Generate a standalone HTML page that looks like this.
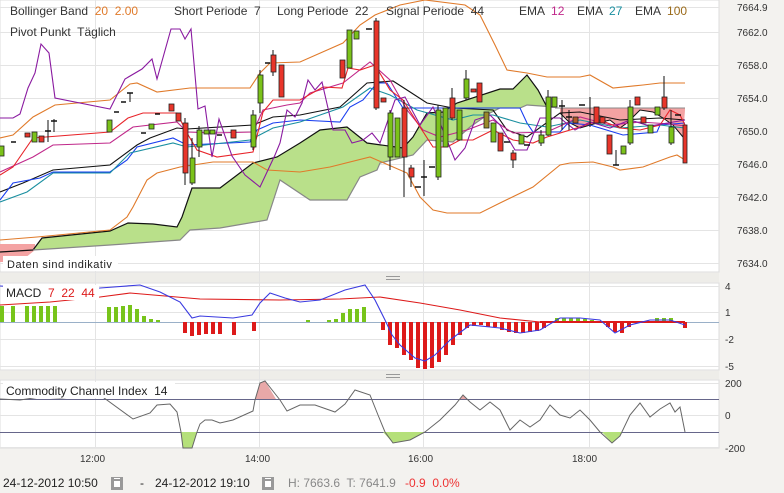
<!DOCTYPE html>
<html><head><meta charset="utf-8"><style>
html,body{margin:0;padding:0;background:#f3f2ef;width:784px;height:493px;overflow:hidden}
svg{display:block}
text{font-family:"Liberation Sans",sans-serif;white-space:pre}
</style></head><body>
<svg width="784" height="493" viewBox="0 0 784 493" xmlns="http://www.w3.org/2000/svg" xml:space="preserve">
<rect x="0" y="0" width="784" height="493" fill="#f3f2ef"/>
<rect x="0" y="0" width="719" height="272" fill="#fff" stroke="#dcdcdc"/>
<rect x="0" y="283" width="719" height="87" fill="#fff" stroke="#dcdcdc"/>
<rect x="0" y="380" width="719" height="68" fill="#fff" stroke="#dcdcdc"/>
<rect x="0" y="273" width="719" height="9" fill="#eeede9"/>
<rect x="0" y="371" width="719" height="8" fill="#eeede9"/>
<g stroke="#999" stroke-width="1">
<line x1="386" y1="276.5" x2="400" y2="276.5"/><line x1="386" y1="279.5" x2="400" y2="279.5"/>
<line x1="386" y1="374.5" x2="400" y2="374.5"/><line x1="386" y1="377.5" x2="400" y2="377.5"/>
</g>
<g stroke="#e4e4e4" stroke-width="1">
<line x1="0" y1="7.5" x2="719" y2="7.5"/><line x1="0" y1="32.5" x2="719" y2="32.5"/>
<line x1="0" y1="65.5" x2="719" y2="65.5"/><line x1="0" y1="98.5" x2="719" y2="98.5"/>
<line x1="0" y1="131.5" x2="719" y2="131.5"/><line x1="0" y1="164.5" x2="719" y2="164.5"/>
<line x1="0" y1="197.5" x2="719" y2="197.5"/><line x1="0" y1="230.5" x2="719" y2="230.5"/>
<line x1="0" y1="263.5" x2="719" y2="263.5"/>
<line x1="95.5" y1="0" x2="95.5" y2="448"/><line x1="259.5" y1="0" x2="259.5" y2="448"/>
<line x1="423.5" y1="0" x2="423.5" y2="448"/><line x1="589.5" y1="0" x2="589.5" y2="448"/>
<line x1="0" y1="286.5" x2="719" y2="286.5"/><line x1="0" y1="312.5" x2="719" y2="312.5"/>
<line x1="0" y1="339.5" x2="719" y2="339.5"/><line x1="0" y1="366.5" x2="719" y2="366.5"/>
<line x1="0" y1="383.5" x2="719" y2="383.5"/><line x1="0" y1="415.5" x2="719" y2="415.5"/>
<line x1="0" y1="447.5" x2="719" y2="447.5"/>
</g>
<polygon fill="#f4a3a3" points="0,244 35,244 35,250 20,262 0,262"/>
<polygon fill="#b9e08a" points="33,250 42,238 110,231 128,223 153,224 177,227 182,217 192,188 220,188 253,163 277,157 300,143 320,130 347,127 367,143 403,148 413,137 427,113 443,112 457,103 500,89 513,89 527,75 538,90 547,107 555,107 547,107 527,105 520,108 500,108 490,113 470,127 453,142 427,140 413,155 380,163 377,170 360,177 347,200 310,200 280,180 267,220 220,228 190,230 180,240 110,245 33,250"/>
<polyline fill="none" stroke="#111" stroke-width="1.2" points="0,252 33,250 42,238 110,231 128,223 153,224 177,227 182,217 192,188 220,188 253,163 277,157 300,143 320,130 347,127 367,143 403,148 413,137 427,113 443,112 457,103 500,89 513,89 527,75 538,90 547,107 555,107"/>
<polyline fill="none" stroke="#888" stroke-width="1.2" points="33,250 110,245 180,240 190,230 220,228 267,220 280,180 310,200 347,200 360,177 377,170 380,163 413,155 427,140 453,142 470,127 490,113 500,108 520,108 527,105 555,107"/>
<polygon fill="#f4a3a3" points="560,108 685,108 685,110 683,137 673,125 663,118 653,112 640,110 627,123 620,128 610,120 597,123 580,128 570,123 560,113"/>
<line x1="555" y1="108" x2="685" y2="108" stroke="#888"/>
<polyline fill="none" stroke="#111" stroke-width="1" points="560,113 570,123 580,128 597,123 610,120 620,128 627,123 640,110 653,112 663,118 673,125 683,137"/>
<polyline fill="none" stroke="#e07a2a" stroke-width="1.1" points="0,138 13,135 33,117 55,105 110,100 130,84 137,83 157,92 190,88 250,88 260,73 270,63 300,62 343,43 360,25 375,15 400,5 425,0 465,5 480,15 495,45 507,70 527,73 547,77 580,77 590,75 613,88 643,85 660,83 685,83"/>
<polyline fill="none" stroke="#e07a2a" stroke-width="1.1" points="0,240 37,237 110,230 127,217 133,207 147,180 157,173 180,167 213,162 253,162 267,170 300,172 330,167 370,157 407,173 420,197 433,210 447,213 480,213 500,203 533,187 560,165 570,163 593,162 613,167 620,170 643,167 670,157 677,155 685,160"/>
<polyline fill="none" stroke="#111" stroke-width="1.1" points="0,192 23,183 53,170 110,165 137,145 150,138 177,128 187,129 253,125 273,117 300,115 340,107 367,83 393,81 407,90 427,103 453,108 493,110 507,130 527,137 560,113 580,112 620,120 660,118 685,120"/>
<polyline fill="none" stroke="#1a3ff0" stroke-width="1.1" points="0,200 13,183 40,178 53,172 110,172 127,160 137,147 173,138 187,145 250,142 257,130 273,123 300,120 340,122 350,107 363,100 377,83 387,83 403,108 520,108 527,123 533,132 560,132 568,123 590,125 623,135 657,132 660,125 685,123"/>
<polyline fill="none" stroke="#1a8fa0" stroke-width="1.1" points="0,202 27,192 53,173 110,173 130,153 173,143 187,147 250,140 273,128 300,122 343,107 370,88 390,95 417,110 453,120 473,115 493,115 520,123 547,127 580,120 620,128 660,125 685,128"/>
<polyline fill="none" stroke="#c0288a" stroke-width="1.1" points="0,172 33,157 53,145 110,143 133,127 177,122 187,132 213,133 253,132 263,110 287,105 300,103 310,93 343,83 370,62 390,80 407,110 423,130 440,137 467,130 493,120 513,133 547,132 580,117 610,125 640,122 670,124 685,126"/>
<polyline fill="none" stroke="#e8242a" stroke-width="1.1" points="0,175 13,167 33,138 110,132 128,118 143,113 177,113 187,133 197,150 217,157 253,152 263,112 273,100 300,100 323,87 342,88 348,68 360,70 375,65 390,90 403,100 420,127 433,147 447,147 460,140 473,140 493,130 513,140 533,143 547,137 580,127 600,120 620,128 640,130 660,125 670,110 680,115 685,125"/>
<polyline fill="none" stroke="#8a1aa0" stroke-width="1.1" points="0,118 13,118 20,114 28,88 35,73 41,44 49,53 55,98 110,109 125,79 142,69 152,59 157,79 171,29 180,29 185,39 191,29 198,109 205,106 212,157 219,119 232,156 245,175 260,187 275,155 280,143 287,110 295,117 302,103 308,80 315,90 322,82 333,130 345,130 352,143 363,140 372,133 380,143 395,100 405,97 420,125 433,107 440,123 455,160 465,148 475,120 490,115 500,125 515,150 527,150 540,118 560,118 575,130 590,122 610,128 630,120 650,126 685,120"/>
<g stroke="#111" stroke-width="1">
<line x1="48" y1="120" x2="48" y2="142"/><line x1="54" y1="119" x2="54" y2="132"/><line x1="130" y1="93" x2="130" y2="102"/>
<line x1="185" y1="118" x2="185" y2="185"/><line x1="192" y1="138" x2="192" y2="185"/><line x1="199" y1="126" x2="199" y2="157"/>
<line x1="260" y1="70" x2="260" y2="113"/><line x1="253" y1="110" x2="253" y2="150"/><line x1="273" y1="50" x2="273" y2="76"/>
<line x1="376" y1="18" x2="376" y2="110"/><line x1="390" y1="110" x2="390" y2="170"/><line x1="404" y1="100" x2="404" y2="197"/>
<line x1="411" y1="165" x2="411" y2="187"/><line x1="424" y1="160" x2="424" y2="196"/><line x1="438" y1="105" x2="438" y2="180"/>
<line x1="452" y1="88" x2="452" y2="120"/><line x1="466" y1="70" x2="466" y2="100"/><line x1="513" y1="150" x2="513" y2="168"/>
<line x1="590" y1="97" x2="590" y2="127"/><line x1="616" y1="150" x2="616" y2="165"/><line x1="630" y1="100" x2="630" y2="145"/>
<line x1="664" y1="76" x2="664" y2="110"/><line x1="671" y1="110" x2="671" y2="145"/><line x1="541" y1="130" x2="541" y2="146"/>
<line x1="548" y1="90" x2="548" y2="136"/><line x1="562" y1="100" x2="562" y2="130"/><line x1="569" y1="110" x2="569" y2="130"/>
</g>
<g stroke="#111" stroke-width="1.5">
<line x1="11" y1="142" x2="16" y2="142"/><line x1="45" y1="131" x2="51" y2="131"/><line x1="51" y1="121" x2="57" y2="121"/>
<line x1="114" y1="112" x2="119" y2="112"/><line x1="121" y1="102" x2="126" y2="102"/><line x1="127" y1="93" x2="133" y2="93"/>
<line x1="141" y1="133" x2="146" y2="133"/><line x1="155" y1="114" x2="160" y2="114"/><line x1="217" y1="135" x2="222" y2="135"/>
<line x1="265" y1="63" x2="270" y2="63"/><line x1="366" y1="29" x2="372" y2="29"/><line x1="415" y1="187" x2="421" y2="187"/>
<line x1="421" y1="177" x2="427" y2="177"/><line x1="429" y1="167" x2="435" y2="167"/><line x1="504" y1="142" x2="510" y2="142"/>
<line x1="524" y1="145" x2="530" y2="145"/><line x1="559" y1="106" x2="565" y2="106"/><line x1="566" y1="117" x2="572" y2="117"/>
<line x1="579" y1="105" x2="585" y2="105"/><line x1="613" y1="165" x2="619" y2="165"/><line x1="675" y1="115" x2="681" y2="115"/>
</g>
<g stroke="#222" stroke-width="0.8">
<rect x="-1" y="146" width="5" height="10" fill="#7bc21a"/>
<rect x="25" y="133" width="5" height="4" fill="#e8352a"/>
<rect x="32" y="132" width="5" height="10" fill="#7bc21a"/>
<rect x="39" y="136" width="5" height="6" fill="#e8352a"/>
<rect x="107" y="120" width="5" height="12" fill="#7bc21a"/>
<rect x="149" y="124" width="5" height="5" fill="#7bc21a"/>
<rect x="169" y="104" width="5" height="7" fill="#e8352a"/>
<rect x="176" y="113" width="5" height="8" fill="#e8352a"/>
<rect x="183" y="123" width="5" height="50" fill="#e8352a"/>
<rect x="190" y="158" width="5" height="25" fill="#7bc21a"/>
<rect x="197" y="130" width="5" height="17" fill="#7bc21a"/>
<rect x="204" y="130" width="5" height="4" fill="#7bc21a"/>
<rect x="210" y="130" width="5" height="4" fill="#7bc21a"/>
<rect x="231" y="130" width="5" height="8" fill="#e8352a"/>
<rect x="251" y="115" width="5" height="32" fill="#7bc21a"/>
<rect x="258" y="75" width="5" height="28" fill="#7bc21a"/>
<rect x="271" y="55" width="5" height="17" fill="#e8352a"/>
<rect x="279" y="65" width="5" height="32" fill="#e8352a"/>
<rect x="340" y="60" width="5" height="18" fill="#e8352a"/>
<rect x="347" y="30" width="5" height="38" fill="#7bc21a"/>
<rect x="354" y="31" width="5" height="8" fill="#7bc21a"/>
<rect x="374" y="21" width="5" height="87" fill="#e8352a"/>
<rect x="381" y="98" width="5" height="4" fill="#e8352a"/>
<rect x="388" y="113" width="5" height="44" fill="#7bc21a"/>
<rect x="395" y="118" width="5" height="39" fill="#7bc21a"/>
<rect x="402" y="108" width="5" height="49" fill="#e8352a"/>
<rect x="409" y="168" width="5" height="9" fill="#e8352a"/>
<rect x="436" y="110" width="5" height="67" fill="#7bc21a"/>
<rect x="443" y="108" width="5" height="39" fill="#7bc21a"/>
<rect x="450" y="98" width="5" height="20" fill="#e8352a"/>
<rect x="457" y="110" width="5" height="30" fill="#7bc21a"/>
<rect x="464" y="79" width="5" height="19" fill="#7bc21a"/>
<rect x="471" y="89" width="5" height="3" fill="#e8352a"/>
<rect x="477" y="83" width="5" height="19" fill="#e8352a"/>
<rect x="484" y="112" width="5" height="16" fill="#9a8a2a"/>
<rect x="491" y="123" width="5" height="19" fill="#7bc21a"/>
<rect x="498" y="133" width="5" height="18" fill="#e8352a"/>
<rect x="511" y="153" width="5" height="7" fill="#e8352a"/>
<rect x="519" y="135" width="5" height="9" fill="#7bc21a"/>
<rect x="539" y="135" width="5" height="8" fill="#7bc21a"/>
<rect x="546" y="97" width="5" height="38" fill="#7bc21a"/>
<rect x="552" y="97" width="5" height="10" fill="#7bc21a"/>
<rect x="573" y="117" width="5" height="6" fill="#b05a2a"/>
<rect x="594" y="107" width="5" height="16" fill="#e8352a"/>
<rect x="600" y="117" width="5" height="6" fill="#e8352a"/>
<rect x="607" y="135" width="5" height="19" fill="#e8352a"/>
<rect x="621" y="146" width="5" height="8" fill="#7bc21a"/>
<rect x="628" y="107" width="5" height="36" fill="#7bc21a"/>
<rect x="635" y="97" width="5" height="8" fill="#e8352a"/>
<rect x="641" y="117" width="5" height="6" fill="#e8352a"/>
<rect x="648" y="125" width="5" height="8" fill="#7bc21a"/>
<rect x="655" y="107" width="5" height="8" fill="#7bc21a"/>
<rect x="662" y="97" width="5" height="11" fill="#e8352a"/>
<rect x="669" y="127" width="5" height="16" fill="#7bc21a"/>
<rect x="683" y="125" width="4" height="38" fill="#e8352a"/>
</g>
<g font-size="12" fill="#333">
<text x="10" y="15">Bollinger Band  <tspan fill="#e07a2a">20  2.00</tspan></text>
<text x="174" y="15">Short Periode  7</text>
<text x="277" y="15">Long Periode  22</text>
<text x="386" y="15">Signal Periode  44</text>
<text x="519" y="15">EMA  <tspan fill="#c0288a">12</tspan></text>
<text x="577" y="15">EMA  <tspan fill="#1a8fa0">27</tspan></text>
<text x="635" y="15">EMA  <tspan fill="#9a6a1a">100</tspan></text>
<text x="10" y="36">Pivot Punkt  Täglich</text>
</g>
<rect x="3" y="256" width="115" height="15" fill="#fff"/>
<text x="7" y="268" font-size="11" fill="#222" letter-spacing="0.5">Daten sind indikativ</text>
<g font-size="10" fill="#333">
<text x="737" y="11">7664.9</text><text x="737" y="36">7662.0</text><text x="737" y="69">7658.0</text>
<text x="737" y="102">7654.0</text><text x="737" y="135">7650.0</text><text x="737" y="168">7646.0</text>
<text x="737" y="201">7642.0</text><text x="737" y="234">7638.0</text><text x="737" y="267">7634.0</text>
<text x="725" y="290">4</text><text x="725" y="316">1</text><text x="725" y="343">-2</text><text x="725" y="370">-5</text>
<text x="725" y="387">200</text><text x="725" y="419">0</text><text x="725" y="452">-200</text>
<text x="80" y="462">12:00</text><text x="245" y="462">14:00</text><text x="408" y="462">16:00</text><text x="572" y="462">18:00</text>
</g>
<line x1="0" y1="322.5" x2="719" y2="322.5" stroke="#9ab0c8"/>
<g fill="#77c41a">
<rect x="0" y="306" width="4" height="16"/><rect x="11" y="306" width="4" height="16"/><rect x="25" y="306" width="4" height="16"/>
<rect x="32" y="306" width="4" height="16"/><rect x="39" y="306" width="4" height="16"/><rect x="46" y="306" width="4" height="16"/><rect x="53" y="306" width="4" height="16"/>
<rect x="107" y="307" width="4" height="15"/><rect x="114" y="307" width="4" height="15"/><rect x="121" y="306" width="4" height="16"/><rect x="128" y="305" width="4" height="17"/>
<rect x="135" y="309" width="4" height="13"/><rect x="142" y="316" width="4" height="6"/><rect x="149" y="319" width="4" height="3"/><rect x="156" y="320" width="4" height="2"/>
<rect x="306" y="320" width="4" height="2"/><rect x="327" y="320" width="4" height="2"/><rect x="334" y="319" width="4" height="3"/><rect x="341" y="313" width="4" height="9"/>
<rect x="348" y="309" width="4" height="13"/><rect x="355" y="309" width="4" height="13"/><rect x="362" y="307" width="4" height="15"/>
<rect x="555" y="318" width="4" height="4"/><rect x="562" y="318" width="4" height="4"/><rect x="569" y="318" width="4" height="4"/><rect x="576" y="318" width="4" height="4"/>
<rect x="583" y="319" width="4" height="3"/><rect x="590" y="320" width="4" height="2"/><rect x="655" y="318" width="4" height="4"/><rect x="662" y="318" width="4" height="4"/><rect x="669" y="318" width="4" height="4"/>
</g>
<g fill="#dd1a1a">
<rect x="183" y="322" width="4" height="11"/><rect x="190" y="322" width="4" height="14"/><rect x="197" y="322" width="4" height="13"/><rect x="204" y="322" width="4" height="12"/>
<rect x="211" y="322" width="4" height="12"/><rect x="218" y="322" width="4" height="12"/><rect x="232" y="322" width="4" height="13"/><rect x="252" y="322" width="4" height="9"/>
<rect x="381" y="322" width="4" height="8"/><rect x="388" y="322" width="4" height="23"/><rect x="395" y="322" width="4" height="26"/><rect x="402" y="322" width="4" height="33"/>
<rect x="409" y="322" width="4" height="38"/><rect x="416" y="322" width="4" height="46"/><rect x="423" y="322" width="4" height="47"/><rect x="430" y="322" width="4" height="46"/>
<rect x="437" y="322" width="4" height="40"/><rect x="444" y="322" width="4" height="33"/><rect x="451" y="322" width="4" height="23"/><rect x="458" y="322" width="4" height="13"/>
<rect x="465" y="322" width="4" height="6"/><rect x="472" y="322" width="4" height="4"/><rect x="479" y="322" width="4" height="3"/><rect x="486" y="322" width="4" height="5"/>
<rect x="493" y="322" width="4" height="5"/><rect x="500" y="322" width="4" height="8"/><rect x="507" y="322" width="4" height="10"/><rect x="514" y="322" width="4" height="11"/>
<rect x="521" y="322" width="4" height="11"/><rect x="528" y="322" width="4" height="10"/><rect x="535" y="322" width="4" height="9"/><rect x="542" y="322" width="4" height="6"/>
<rect x="606" y="322" width="4" height="5"/><rect x="613" y="322" width="4" height="10"/><rect x="620" y="322" width="4" height="11"/><rect x="627" y="322" width="4" height="5"/><rect x="683" y="322" width="4" height="6"/>
<rect x="540" y="321" width="145" height="2"/>
</g>
<polyline fill="none" stroke="#dd1a1a" stroke-width="1.1" points="0,305 50,302 100,297 130,293 200,299 280,300 340,299 380,297 420,303 460,310 500,318 540,322 685,322"/>
<polyline fill="none" stroke="#3a3ae0" stroke-width="1.1" points="0,286 60,289 100,288 140,285 160,292 180,302 192,318 200,316 233,318 252,315 260,303 270,293 285,298 300,302 320,300 345,290 365,285 375,300 385,320 392,335 400,345 415,358 425,361 435,355 450,340 470,325 500,328 520,333 540,330 560,318 580,318 600,320 615,333 630,325 650,320 670,320 685,325"/>
<rect x="3" y="285" width="96" height="15" fill="#fff"/>
<text x="6" y="297" font-size="12" fill="#222">MACD  <tspan fill="#dd1a1a">7  22  44</tspan></text>
<line x1="0" y1="399.5" x2="719" y2="399.5" stroke="#66668a"/>
<line x1="0" y1="432.5" x2="719" y2="432.5" stroke="#66668a"/>
<polygon fill="#e8a8a8" points="255,399 260,383 265,381 276,399"/>
<polygon fill="#e8a8a8" points="460,399 463,395 467,399"/>
<polygon fill="#b5e07a" points="181,432 183,448 192,448 197,432"/>
<polygon fill="#b5e07a" points="383,432 393,443 410,440 425,432"/>
<polygon fill="#b5e07a" points="602,432 612,443 620,436 622,432"/>
<polyline fill="none" stroke="#666" stroke-width="1" points="0,399 20,400 40,397 60,398 100,395 133,419 150,413 157,405 170,404 177,412 181,432 183,448 192,448 197,432 200,424 205,420 212,420 220,423 233,420 253,411 255,400 260,383 265,381 280,400 287,411 300,405 315,405 335,412 345,404 355,390 370,395 378,415 385,432 393,443 410,440 425,432 440,420 455,405 463,395 470,402 480,410 490,402 500,410 510,430 520,420 530,427 540,420 550,405 560,415 570,418 580,410 590,420 600,432 612,443 620,436 630,415 640,403 650,417 660,409 670,403 675,412 680,407 685,432"/>
<rect x="3" y="382" width="172" height="16" fill="#fff"/>
<text x="6" y="395" font-size="12" fill="#222">Commodity Channel Index  14</text>
<g font-size="12">
<text x="3" y="487" fill="#222">24-12-2012 10:50</text>
<text x="140" y="487" fill="#222">-</text>
<text x="155" y="487" fill="#222">24-12-2012 19:10</text>
<text x="288" y="487" fill="#888">H: 7663.6  T: 7641.9</text>
<text x="405" y="487" fill="#e33">-0.9  0.0%</text>
</g>
<g>
<rect x="111" y="477" width="12" height="13" fill="#999"/><rect x="114" y="481" width="6" height="6" fill="#fff"/><rect x="114" y="478" width="6" height="1" fill="#fff"/>
<rect x="262" y="477" width="12" height="13" fill="#999"/><rect x="265" y="481" width="6" height="6" fill="#fff"/><rect x="265" y="478" width="6" height="1" fill="#fff"/>
</g>
</svg>
</body></html>
